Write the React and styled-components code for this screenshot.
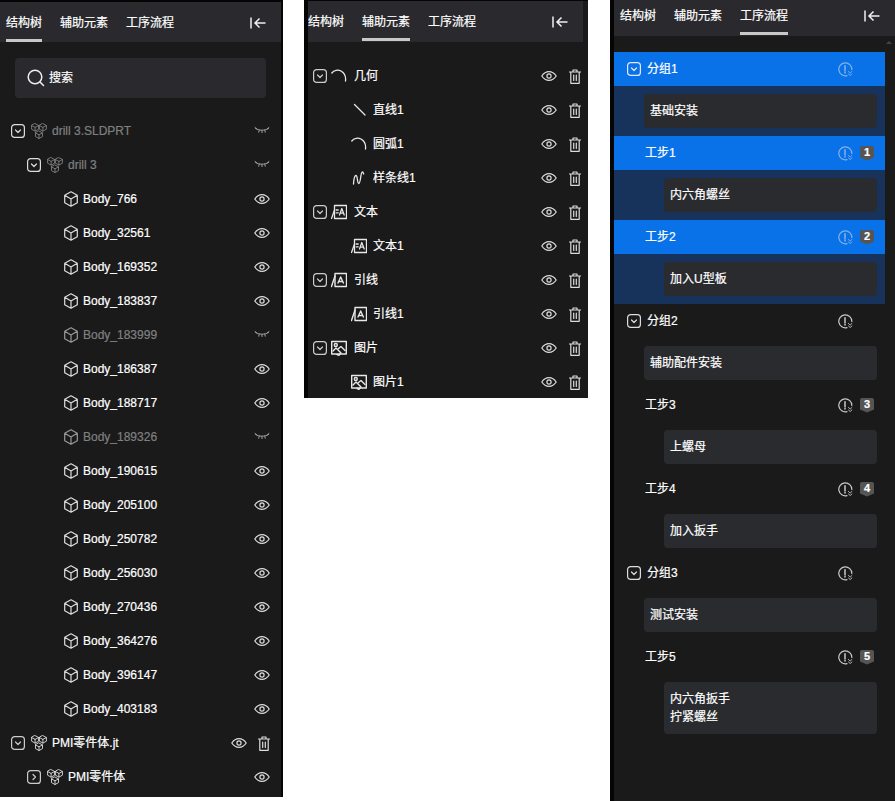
import React from 'react';
import styled, { createGlobalStyle } from 'styled-components';

const Global = createGlobalStyle`
  html, body { margin: 0; padding: 0; background: #fff; }
  body { font-family: "Liberation Sans", "Noto Sans CJK SC", sans-serif; font-size: 12px; color: #fff; overflow: hidden; -webkit-text-stroke: 0.2px currentColor; }
`;

const Page = styled.div`
  display: flex;
  align-items: flex-start;
  width: 895px;
  height: 801px;
  overflow: hidden;
`;
const Panel = styled.section`
  flex: none;
  box-sizing: border-box;
  width: ${p => p.$w}px;
  height: ${p => p.$h}px;
  margin-right: ${p => p.$mr || 0}px;
  background: #1a1a1a;
  border-top: ${p => p.$top || 0}px solid #050505;
  border-left: ${p => p.$left || 0}px solid #050505;
  border-right: ${p => p.$right || 0}px solid #050505;
  display: flex;
  flex-direction: column;
`;
const TabBar = styled.div`
  flex: none;
  box-sizing: border-box;
  display: flex;
  align-items: stretch;
  gap: 18px;
  height: ${p => p.$h}px;
  margin-right: ${p => p.$mr || 0}px;
  padding-left: ${p => p.$pl || 0}px;
  padding-right: 15px;
  padding-bottom: ${p => p.$pb || 0}px;
  background: #2a2a2e;
`;
const Tab = styled.div`
  display: flex;
  align-items: center;
  padding-top: ${p => p.$pt || 0}px;
  line-height: 18px;
  border-bottom: 3px solid ${p => (p.$active ? '#c8c8c8' : 'transparent')};
  box-sizing: border-box;
`;
const CollapseBtn = styled.svg`
  margin: auto 0 auto auto;
  width: 16px;
  height: 16px;
  color: #f0f0f0;
  transform: translateY(${p => p.$dy}px);
`;
const SearchBox = styled.div`
  flex: none;
  display: flex;
  align-items: center;
  gap: 4px;
  height: 40px;
  margin: 16px 15px 16px;
  padding-left: 12px;
  background: #2a2a2e;
  border-radius: 4px;
`;
const Row = styled.div`
  flex: none;
  display: flex;
  align-items: center;
  box-sizing: border-box;
  height: 34px;
  padding-left: ${p => p.$indent}px;
  padding-right: ${p => p.$pr ?? 11}px;
  gap: ${p => p.$gap || 4}px;
  color: ${p => (p.$dim ? '#808080' : '#fff')};
  background: ${p => (p.$selected ? '#0a72e8' : 'transparent')};
`;
const Label = styled.span`
  line-height: 18px;
  white-space: nowrap;
  margin-left: ${p => p.$ml || 0}px;
`;
const Actions = styled.div`
  margin-left: auto;
  display: flex;
  align-items: center;
  gap: ${p => p.$gap || 11}px;
`;
const Rows = styled.div`
  display: flex;
  flex-direction: column;
  padding-top: ${p => p.$pt || 0}px;
`;
const IconBox = styled.svg`
  flex: none;
  display: block;
  width: ${p => p.$w || 16}px;
  height: ${p => p.$h || 16}px;
  color: ${p => p.$color || 'currentColor'};
  fill: none;
  stroke: currentColor;
  stroke-width: ${p => p.$sw || 1.2};
  stroke-linecap: round;
  stroke-linejoin: round;
`;
const ProcessBody = styled.div`
  position: relative;
  flex: 1;
  padding-right: 10px;
  padding-top: 16px;
`;
const ScrollArrow = styled.div`
  position: absolute;
  right: 3px;
  top: 5px;
  border-left: 3px solid transparent;
  border-right: 3px solid transparent;
  border-bottom: 3px solid #444;
`;
const CardWrap = styled.div`
  padding: 8px 8px 8px ${p => p.$indent}px;
  background: ${p => (p.$selected ? '#17335c' : 'transparent')};
`;
const Card = styled.div`
  padding: 8px 6px;
  background: #2a2b2f;
  border-radius: 4px;
  line-height: 18px;
  white-space: pre-line;
`;
const Badge = styled.div`
  flex: none;
  width: 14px;
  height: 15px;
  background: #555;
  border-radius: 2px 2px 0 0;
  clip-path: polygon(0 0, 100% 0, 100% 80%, 50% 100%, 0 80%);
  color: #fff;
  font-size: 11px;
  font-weight: 700;
  line-height: 13px;
  text-align: center;
`;
const BadgeSlot = styled.div`
  flex: none;
  width: 14px;
`;
const HistoryWrap = styled.div`
  display: flex;
  opacity: ${p => (p.$selected ? 0.55 : 0.85)};
`;

const Chevron = ({ open = true, color }) => (
  <IconBox viewBox="0 0 14 14" $w={14} $h={14} $color={color} $sw={1.2}>
    <rect x=".6" y=".6" width="12.800" height="12.800" rx="3" />
    {open ? <path d="M4.500 6l2.500 2.500L9.500 6" /> : <path d="M6 4.500L8.500 7 6 9.500" />}
  </IconBox>
);
const Eye = () => (
  <IconBox viewBox="0 0 16 16" $color="#dcdcdc">
    <path d="M.8 8C2.800 5 5.300 3.600 8 3.600S13.200 5 15.200 8C13.200 11 10.700 12.400 8 12.400S2.800 11 .8 8Z" />
    <circle cx="8" cy="8" r="2.100" />
  </IconBox>
);
const EyeOff = () => (
  <IconBox viewBox="0 0 16 16" $color="#a0a0a0" $sw={1}>
    <path d="M1.500 5.500C5 7.800 11 7.800 14.500 5.500M1 4.500l1.700 1.300M15 4.500l-1.700 1.300M5.200 7l-.4 2.200M8 7.400v2.200M10.800 7l.4 2.200" />
  </IconBox>
);
const Trash = () => (
  <IconBox viewBox="0 0 12 15" $w={12} $h={15} $color="#dcdcdc">
    <path d="M.5 3h11M4 3V1h4v2M1.800 3v11.300h8.400V3M4.700 6v5.500M7.300 6v5.500" />
  </IconBox>
);
const Cube = ({ color }) => (
  <IconBox viewBox="0 0 16 16" $color={color || '#ddd'}>
    <path d="M8 .8l6.300 3.500v7.400L8 15.200l-6.300-3.500V4.300ZM1.700 4.300L8 8l6.300-3.700M8 8v7.200" />
  </IconBox>
);
const SmallCube = ({ x, y }) => (
  <path
    transform={`translate(${x} ${y})`}
    d="M3.500 0l3.500 1.900v3.700L3.500 7.500 0 5.600V1.900ZM0 1.900l3.500 1.900 3.500-1.900M3.500 3.800v3.700"
  />
);
const Assembly = ({ color }) => (
  <IconBox viewBox="0 0 16 16" $color={color || '#ddd'} $sw={0.9}>
    <SmallCube x={.6} y={.6} />
    <SmallCube x={8.400} y={.6} />
    <SmallCube x={4.500} y={8} />
  </IconBox>
);
const ArcIcon = () => (
  <IconBox viewBox="0 0 16 16" $color="#e8e8e8" $sw={1.3}>
    <path d="M.8 5C3 2 7 1.500 10 3C13.500 5 15 9 14.500 13" />
  </IconBox>
);
const LineIcon = () => (
  <IconBox viewBox="0 0 16 16" $color="#e8e8e8" $sw={1.3}>
    <path d="M3.500 2.500l10.500 10.500" />
  </IconBox>
);
const SplineIcon = () => (
  <IconBox viewBox="0 0 16 16" $color="#e8e8e8" $sw={1.3}>
    <path d="M2.500 14C2.800 9 3.800 5.500 5 5.500C6.800 5.500 6 13.500 7.800 13.500C9.800 13.500 9.500 2 11.300 2C12 2 12.400 3 12.700 4" />
  </IconBox>
);
const TextIcon = () => (
  <IconBox viewBox="0 0 16 16" $color="#e8e8e8" $sw={1.3}>
    <rect x="3.500" y="1.500" width="12" height="13" />
    <path d="M.5 14.500L3.500 6M8.500 11l2.300-6.500 2.400 6.500M9.300 9.200h3.100M5.200 6h2M5.200 8.800h2" />
  </IconBox>
);
const LeaderIcon = () => (
  <IconBox viewBox="0 0 16 16" $color="#e8e8e8" $sw={1.4}>
    <rect x="4" y="1.500" width="11.500" height="13" />
    <path d="M.5 14.500L4 4M7 11l2.700-6 2.700 6M8 9.500h3.500" />
  </IconBox>
);
const ImageIcon = () => (
  <IconBox viewBox="0 0 16 16" $color="#e8e8e8" $sw={1.4}>
    <rect x=".7" y="1.500" width="14.600" height="12.500" />
    <circle cx="4.800" cy="5" r="1.500" />
    <path d="M2 11l3-3 5 5M7.500 8.500l2.500-2 4 4M6 14.500l2 .8 1-1.300" />
  </IconBox>
);
const History = ({ selected }) => (
  <HistoryWrap $selected={selected}>
    <IconBox viewBox="0 0 15 15" $w={15} $h={15} $color="#e8e8e8">
      <path d="M9 13.600A6.500 6.500 0 1 1 13.800 7.500" />
      <path d="M7 3.800v5M7 10.300v.8" strokeWidth="1.500" />
      <path d="M10.500 9.500l1.700 1.500 1.700-1.500M10.500 12l1.700 1.500 1.700-1.500" strokeWidth=".9" />
    </IconBox>
  </HistoryWrap>
);

const Collapse = ({ dy }) => (
  <CollapseBtn $dy={dy} viewBox="0 0 16 16" fill="none" stroke="currentColor" strokeWidth="1.500">
    <path d="M1 2.500v11M15.500 8H5M9.500 3.500L5 8l4.500 4.500" />
  </CollapseBtn>
);

const Tabs = ({ active, h, pl, mr, pb, pt, dy }) => (
  <TabBar $h={h} $pl={pl} $mr={mr} $pb={pb}>
    {['结构树', '辅助元素', '工序流程'].map((t, i) => (
      <Tab key={t} $active={i === active} $pt={pt}>{t}</Tab>
    ))}
    <Collapse dy={dy} />
  </TabBar>
);

const hidden = new Set(['Body_183999', 'Body_189326']);
const bodies = ['Body_766', 'Body_32561', 'Body_169352', 'Body_183837', 'Body_183999', 'Body_186387', 'Body_188717', 'Body_189326', 'Body_190615', 'Body_205100', 'Body_250782', 'Body_256030', 'Body_270436', 'Body_364276', 'Body_396147', 'Body_403183'];

const StructurePanel = () => (
  <Panel $w={283} $h={797} $top={2} $right={2} $mr={21}>
    <Tabs active={0} h={40} pl={6} pt={5} dy={1} />
    <SearchBox>
      <IconBox viewBox="0 0 18 18" $w={18} $h={18} $color="#eee" $sw={1.5}>
        <circle cx="8" cy="8" r="6.800" />
        <path d="M13 13l3.500 3.500" />
      </IconBox>
      <Label>搜索</Label>
    </SearchBox>
    <Rows>
      <Row $indent={11} $gap={6} $dim>
        <Chevron color="#ddd" />
        <Assembly color="#808080" />
        <Label $ml={-1}>drill 3.SLDPRT</Label>
        <Actions><EyeOff /></Actions>
      </Row>
      <Row $indent={27} $gap={6} $dim>
        <Chevron color="#ddd" />
        <Assembly color="#808080" />
        <Label $ml={-1}>drill 3</Label>
        <Actions><EyeOff /></Actions>
      </Row>
      {bodies.map(b => (
        <Row key={b} $indent={63} $gap={4} $dim={hidden.has(b)}>
          <Cube color={hidden.has(b) ? '#999' : undefined} />
          <Label>{b}</Label>
          <Actions>{hidden.has(b) ? <EyeOff /> : <Eye />}</Actions>
        </Row>
      ))}
      <Row $indent={11} $gap={6}>
        <Chevron color="#ccc" />
        <Assembly />
        <Label $ml={-1}>PMI零件体.jt</Label>
        <Actions><Eye /><Trash /></Actions>
      </Row>
      <Row $indent={27} $gap={6}>
        <Chevron open={false} color="#ccc" />
        <Assembly />
        <Label $ml={-1}>PMI零件体</Label>
        <Actions><Eye /></Actions>
      </Row>
    </Rows>
  </Panel>
);

const auxRows = [
  { t: '几何', I: ArcIcon, group: true },
  { t: '直线1', I: LineIcon },
  { t: '圆弧1', I: ArcIcon },
  { t: '样条线1', I: SplineIcon },
  { t: '文本', I: TextIcon, group: true },
  { t: '文本1', I: TextIcon },
  { t: '引线', I: LeaderIcon, group: true },
  { t: '引线1', I: LeaderIcon },
  { t: '图片', I: ImageIcon, group: true },
  { t: '图片1', I: ImageIcon },
];

const AuxPanel = () => (
  <Panel $w={284} $h={398} $top={1} $left={4} $mr={22}>
    <Tabs active={1} h={41} mr={5} pb={1} pt={5} dy={1} />
    <Rows $pt={17}>
      {auxRows.map(({ t, I, group }) => (
        <Row key={t} $indent={group ? 5 : 43} $gap={group ? 4 : 3} $pr={7}>
          {group && <Chevron color="#ccc" />}
          <I />
          <Label $ml={3}>{t}</Label>
          <Actions $gap={12}><Eye /><Trash /></Actions>
        </Row>
      ))}
    </Rows>
  </Panel>
);

const Group = ({ title, card, selected }) => (
  <>
    <Row $indent={13} $gap={6} $selected={selected}>
      <Chevron color={selected ? '#dfe9f7' : '#ddd'} />
      <Label>{title}</Label>
      <Actions $gap={7}><History selected={selected} /><BadgeSlot /></Actions>
    </Row>
    <CardWrap $indent={30} $selected={selected}><Card>{card}</Card></CardWrap>
  </>
);
const Step = ({ title, n, card, selected }) => (
  <>
    <Row $indent={31} $selected={selected}>
      <Label>{title}</Label>
      <Actions $gap={7}><History selected={selected} /><Badge>{n}</Badge></Actions>
    </Row>
    <CardWrap $indent={50} $selected={selected}><Card>{card}</Card></CardWrap>
  </>
);

const ProcessPanel = () => (
  <Panel $w={285} $h={801} $left={4}>
    <Tabs active={2} h={36} pl={6} pb={1} dy={-2} />
    <ProcessBody>
      <ScrollArrow />
      <Group selected title="分组1" card="基础安装" />
      <Step selected title="工步1" n={1} card="内六角螺丝" />
      <Step selected title="工步2" n={2} card="加入U型板" />
      <Group title="分组2" card="辅助配件安装" />
      <Step title="工步3" n={3} card="上螺母" />
      <Step title="工步4" n={4} card="加入扳手" />
      <Group title="分组3" card="测试安装" />
      <Step title="工步5" n={5} card={'内六角扳手\n拧紧螺丝'} />
    </ProcessBody>
  </Panel>
);

export default function App() {
  return (
    <Page>
      <Global />
      <StructurePanel />
      <AuxPanel />
      <ProcessPanel />
    </Page>
  );
}
